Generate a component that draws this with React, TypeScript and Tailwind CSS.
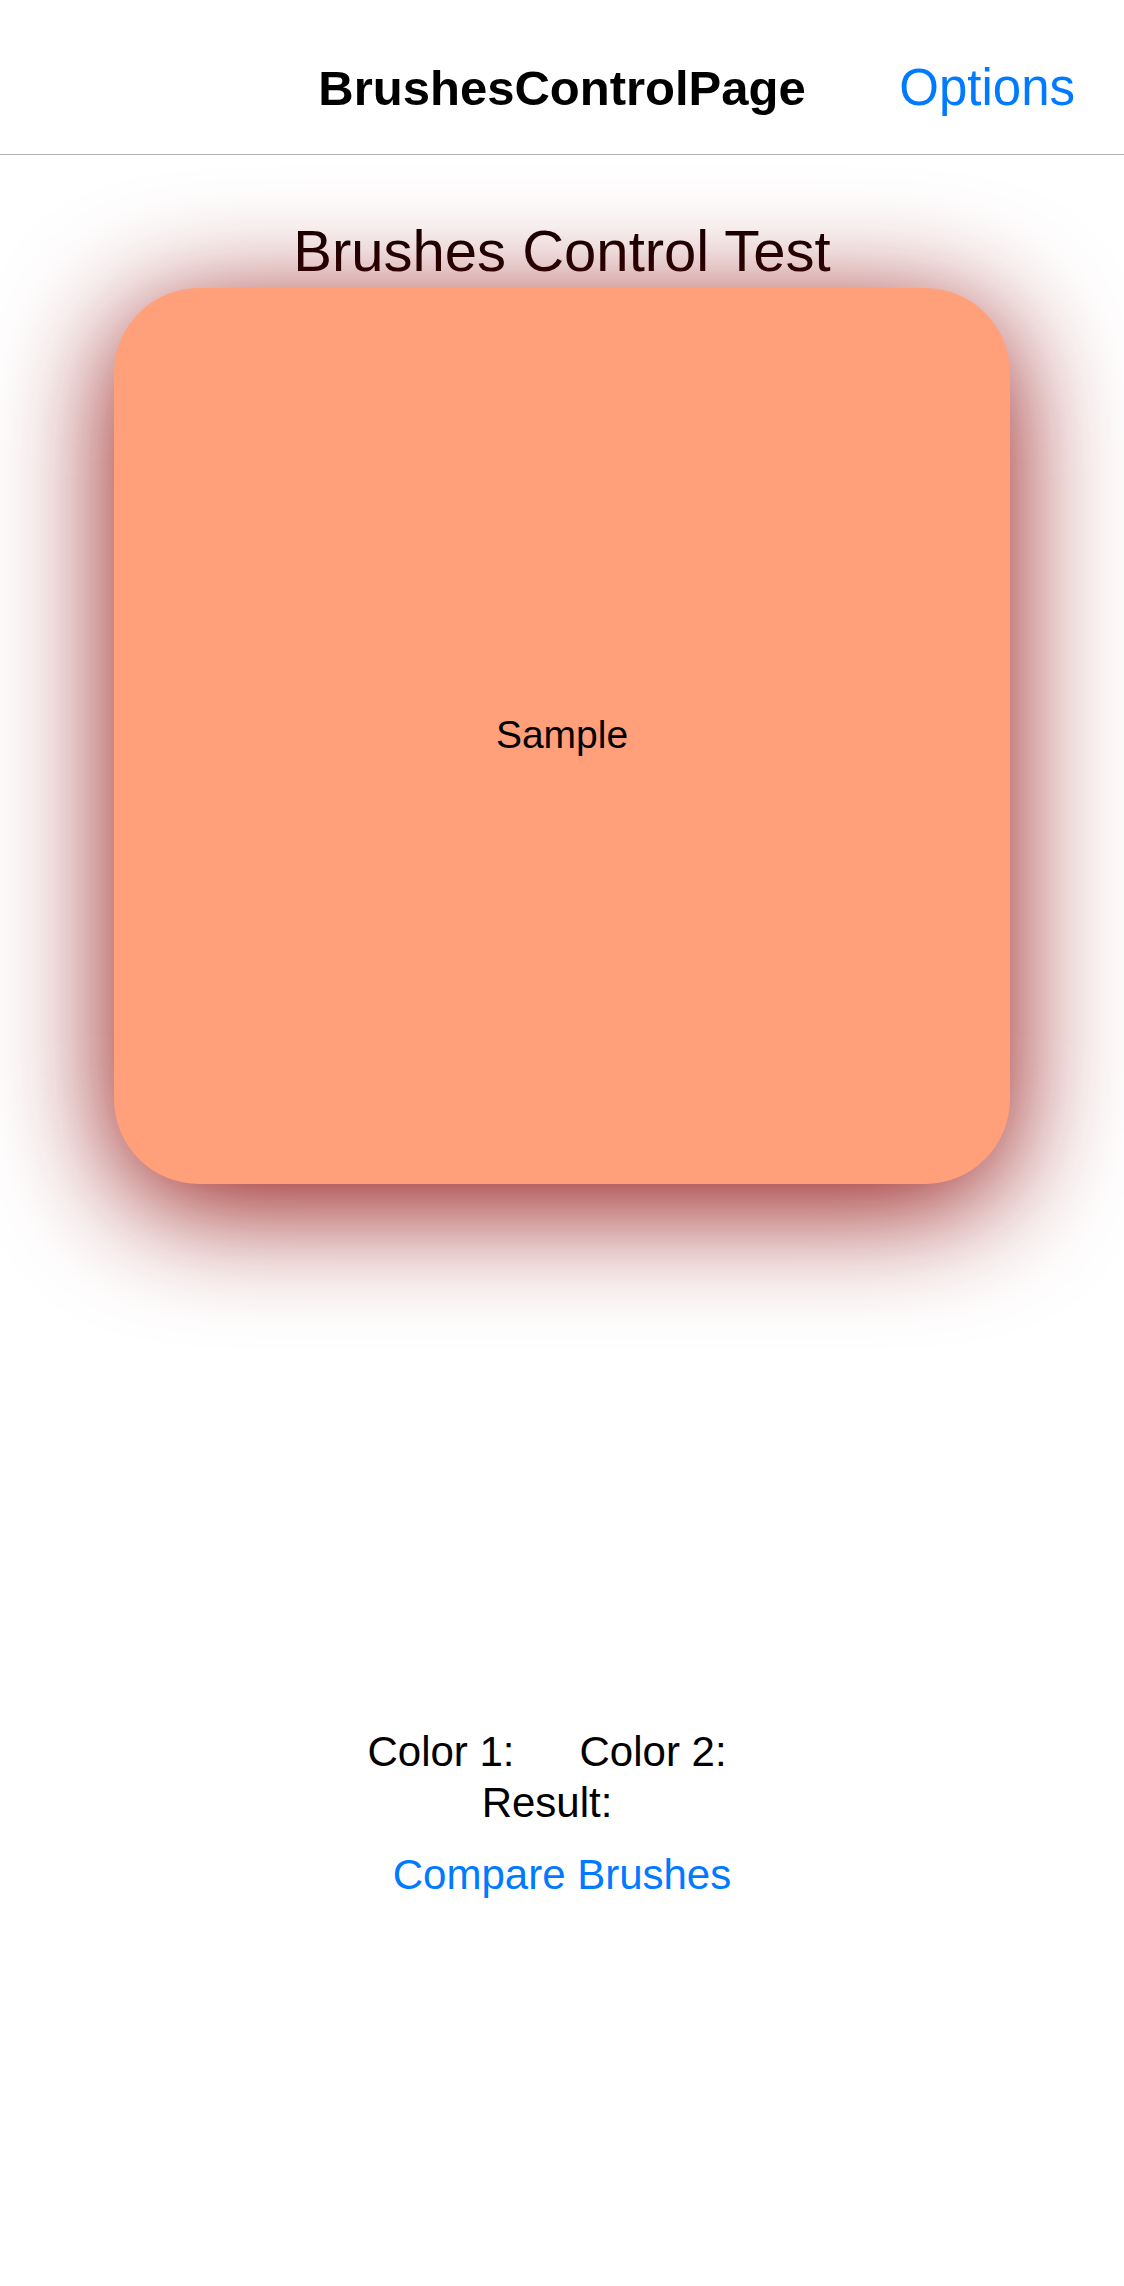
import React from 'react';

const font = { fontFamily: '"Liberation Sans", Arial, sans-serif' };

const NavBar: React.FC = () => {
  return (
    <div className="relative z-10 grid h-[155px] grid-cols-[1fr_auto_1fr] items-baseline border-b border-[#b2b2b2] bg-white pt-[58px]">
      <div />
      <h1 className="text-[49px] font-bold leading-[60px] text-black">BrushesControlPage</h1>
      <button className="justify-self-end pr-[49px] text-[51px] leading-[60px] text-[#007aff]">Options</button>
    </div>
  );
};

const ColorLabel: React.FC<{ label: string }> = ({ label }) => (
  <div className="flex items-center">
    <span>{label}</span>
    <div className="h-[30px] w-[30px]" />
  </div>
);

export default function App() {
  return (
    <div className="min-h-[2286px] w-full overflow-hidden bg-white" style={font}>
      <NavBar />
      <div className="flex flex-col items-center">
        <h2 className="mt-[62px] text-[58px] leading-[67px] text-[#120000]">Brushes Control Test</h2>
        <div className="relative mt-[4px] flex h-[896px] w-[896px] items-center justify-center rounded-[85px] bg-[#ffa07a] shadow-[0_22px_120px_rgba(139,0,0,0.95)]">
          <span className="pb-[2px] text-[39px] text-black">Sample</span>
        </div>
        <div className="mt-[542px] flex flex-col items-center text-[42px] leading-[51px] text-black">
          <div className="flex gap-[35px]">
            <ColorLabel label="Color 1:" />
            <ColorLabel label="Color 2:" />
          </div>
          <ColorLabel label="Result:" />
          <button className="mt-[21px] text-[#007aff]">Compare Brushes</button>
        </div>
      </div>
    </div>
  );
}
